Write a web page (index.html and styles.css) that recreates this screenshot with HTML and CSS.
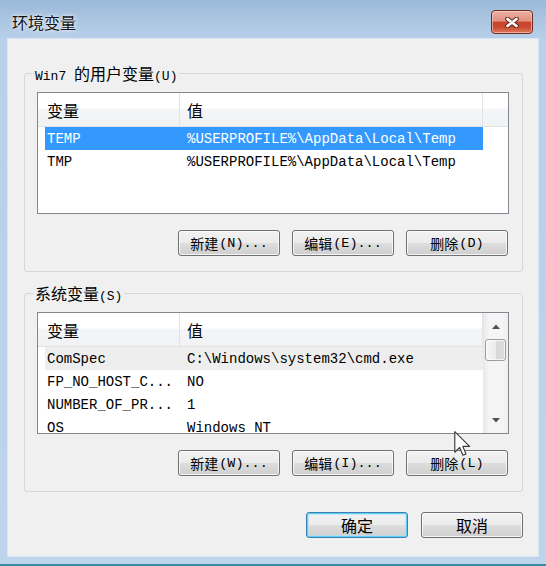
FILE: index.html
```html
<!DOCTYPE html>
<html lang="zh-CN">
<head>
<meta charset="utf-8">
<title>环境变量</title>
<link rel="stylesheet" href="styles.css">
</head>
<body>
<div class="window">
  <div class="titlebar">
    <span class="title">环境变量</span>
    <div class="close" aria-label="关闭">
      <svg width="14" height="11" viewBox="0 0 14 11">
        <path d="M2.5 2 L11.5 9 M11.5 2 L2.5 9" stroke="#5a2219" stroke-width="4.6" stroke-linecap="round" fill="none"/>
        <path d="M2.5 2 L11.5 9 M11.5 2 L2.5 9" stroke="#ffffff" stroke-width="2.7" stroke-linecap="round" fill="none"/>
      </svg>
    </div>
  </div>
  <div class="client">
    <fieldset class="group">
      <legend><span class="lat">Win7</span> <span class="zh">的用户变量</span><span class="lat">(U)</span></legend>
      <div class="group-body">
        <div class="listview">
          <div class="lv-main">
            <div class="lv-header">
              <div class="hcol hc1"><span class="zh">变量</span></div>
              <div class="hcol hc2"><span class="zh">值</span></div>
              <div class="hcol hfill"></div>
            </div>
            <div class="lv-row sel"><div class="cell c1">TEMP</div><div class="cell c2">%USERPROFILE%\AppData\Local\Temp</div></div>
            <div class="lv-row"><div class="cell c1">TMP</div><div class="cell c2">%USERPROFILE%\AppData\Local\Temp</div></div>
          </div>
        </div>
        <div class="btnrow">
          <div class="btn small"><span class="zh">新建</span><span class="lat">(N)...</span></div>
          <div class="btn small"><span class="zh">编辑</span><span class="lat">(E)...</span></div>
          <div class="btn small"><span class="zh">删除</span><span class="lat">(D)</span></div>
        </div>
      </div>
    </fieldset>

    <fieldset class="group second">
      <legend><span class="zh">系统变量</span><span class="lat">(S)</span></legend>
      <div class="group-body">
        <div class="listview">
          <div class="lv-main">
            <div class="lv-header">
              <div class="hcol hc1"><span class="zh">变量</span></div>
              <div class="hcol hc2"><span class="zh">值</span></div>
            </div>
            <div class="lv-row hover"><div class="cell c1">ComSpec</div><div class="cell c2">C:\Windows\system32\cmd.exe</div></div>
            <div class="lv-row"><div class="cell c1">FP_NO_HOST_C...</div><div class="cell c2">NO</div></div>
            <div class="lv-row"><div class="cell c1">NUMBER_OF_PR...</div><div class="cell c2">1</div></div>
            <div class="lv-row"><div class="cell c1">OS</div><div class="cell c2">Windows_NT</div></div>
          </div>
          <div class="scrollbar">
            <div class="sb-btn"><svg width="8" height="5" viewBox="0 0 8 5"><path d="M0 5 L4 0.5 L8 5 Z" fill="#505050"/></svg></div>
            <div class="sb-track"><div class="sb-thumb"></div></div>
            <div class="sb-btn"><svg width="8" height="5" viewBox="0 0 8 5"><path d="M0 0 L4 4.5 L8 0 Z" fill="#505050"/></svg></div>
          </div>
        </div>
        <div class="btnrow">
          <div class="btn small"><span class="zh">新建</span><span class="lat">(W)...</span></div>
          <div class="btn small"><span class="zh">编辑</span><span class="lat">(I)...</span></div>
          <div class="btn small"><span class="zh">删除</span><span class="lat">(L)</span></div>
        </div>
      </div>
    </fieldset>

    <div class="dlgbtns">
      <div class="btn big default"><span class="zh">确定</span></div>
      <div class="btn big"><span class="zh">取消</span></div>
    </div>
  </div>
</div>
<svg class="cursor" width="17" height="27" viewBox="0 0 13 21">
  <path d="M0.5 0.5 L0.5 16.5 L4.3 12.8 L6.8 18.8 L9.2 17.8 L6.8 12 L12 12 Z" fill="#ffffff" stroke="#3a3a3a" stroke-width="0.9" stroke-linejoin="round"/>
</svg>
</body>
</html>
```

FILE: styles.css
```css
* { box-sizing: border-box; }
html, body { margin: 0; padding: 0; }
body {
  width: 546px;
  height: 566px;
  overflow: hidden;
  position: relative;
  background: linear-gradient(180deg, #9ab8d9 0px, #acc6e2 20px, #b8d0ea 40px, #bdd4ec 100%);
  font-family: "Liberation Mono", "Noto Sans CJK SC", monospace;
  font-size: 14px;
  color: #000;
}
.zh { font-family: "Noto Sans CJK SC", sans-serif; }

.window {
  display: flex;
  flex-direction: column;
  height: 566px;
  border-bottom: 2px solid #3b8aa1;
}
.titlebar {
  height: 39px;
  flex: none;
  display: flex;
  justify-content: space-between;
  align-items: flex-start;
  padding: 0 13px 0 12px;
}
.title {
  font-family: "Noto Sans CJK SC", sans-serif;
  font-size: 16px;
  line-height: 20px;
  margin-top: 12px;
  color: #111;
  text-shadow: 0 0 5px rgba(255,255,255,0.9), 0 0 2px rgba(255,255,255,0.8);
}
.close {
  margin-top: 10px;
  width: 42px;
  height: 24px;
  border: 1px solid #6a2b22;
  border-radius: 4px;
  background: linear-gradient(180deg, #eab0a4 0%, #e0907f 45%, #c8432b 52%, #cc4c33 75%, #e07a5c 100%);
  box-shadow: inset 0 0 0 1px rgba(255,220,210,0.55);
  display: flex;
  align-items: center;
  justify-content: center;
}

.client {
  margin: 0 8px;
  height: 517px;
  flex: none;
  background: #f0f0f0;
  padding: 25px 15px 0 16px;
  box-shadow: 0 0 0 1px rgba(255,255,255,0.45);
}

.group {
  margin: 0;
  padding: 0;
  border: 1px solid #d7d7d7;
  border-radius: 3px;
}
.group.second { margin-top: 12px; }
.group legend {
  margin-left: 8px;
  padding: 0 2px;
  height: 18px;
  line-height: 18px;
  font-size: 13px;
  white-space: nowrap;
}
.group legend .zh { font-size: 16px; }
.group-body { padding: 10px 13px 15px 12px; }

.listview {
  height: 122px;
  border: 1px solid #828790;
  background: #fff;
  display: flex;
  overflow: hidden;
}
.lv-main { flex: 1; min-width: 0; overflow: hidden; }
.lv-header {
  display: flex;
  height: 34px;
  background: linear-gradient(180deg, #ffffff 0%, #ffffff 45%, #f4f5f6 50%, #f1f2f3 100%);
  border-bottom: 1px solid #e2e2e2;
}
.hcol {
  display: flex;
  align-items: center;
  font-size: 16px;
  border-right: 1px solid #e1e3e6;
}
.hc1 { width: 142px; padding-left: 9px; }
.hc2 { width: 303px; padding-left: 7px; }
.hfill { flex: 1; border-right: none; }

.lv-row {
  display: flex;
  align-items: center;
  height: 23px;
  width: 438px;
  margin-left: 7px;
  white-space: nowrap;
}
.lv-row.sel { background: #3399ff; color: #fff; }
.lv-row.hover { background: #eeeeee; }
.cell { overflow: hidden; }
.c1 { width: 135px; padding-left: 2px; }
.c2 { flex: 1; padding-left: 7px; }

.scrollbar {
  width: 25px;
  flex: none;
  display: flex;
  flex-direction: column;
  background: linear-gradient(90deg, #ebebeb 0%, #f5f5f5 25%, #f5f5f5 75%, #eeeeee 100%);
  border-left: 1px solid #e8e8e8;
}
.sb-btn {
  height: 26px;
  flex: none;
  display: flex;
  align-items: center;
  justify-content: center;
}
.sb-track { flex: 1; padding: 0 2px 0 1px; }
.sb-thumb {
  height: 22px;
  border: 1px solid #9c9c9c;
  border-radius: 3px;
  background: linear-gradient(90deg, #f6f6f6 0%, #ececec 50%, #d8d8d8 52%, #dcdcdc 100%);
  box-shadow: inset 0 0 0 1px rgba(255,255,255,0.7);
}

.btnrow {
  display: flex;
  justify-content: flex-end;
  gap: 12px;
  margin-top: 16px;
  padding-right: 1px;
}
.btn {
  width: 102px;
  height: 26px;
  border: 1px solid #707070;
  border-radius: 3px;
  background: linear-gradient(180deg, #f2f2f2 0%, #ebebeb 48%, #dddddd 52%, #cfcfcf 100%);
  box-shadow: inset 0 0 0 1px rgba(252,252,252,0.85);
  display: flex;
  align-items: center;
  justify-content: center;
  white-space: nowrap;
}
.btn.small .zh { font-size: 14px; }
.btn.small .lat { font-size: 13.5px; margin-left: 1px; }
.btn.big .zh { font-size: 16px; }
.btn.default {
  border-color: #3c7fb1;
  box-shadow: inset 0 0 0 1px #5ed0f4, inset 0 0 0 2px rgba(170,225,245,0.6);
}

.dlgbtns {
  display: flex;
  justify-content: flex-end;
  gap: 13px;
  margin-top: 20px;
}

.cursor {
  position: absolute;
  left: 454px;
  top: 431px;
}
```
